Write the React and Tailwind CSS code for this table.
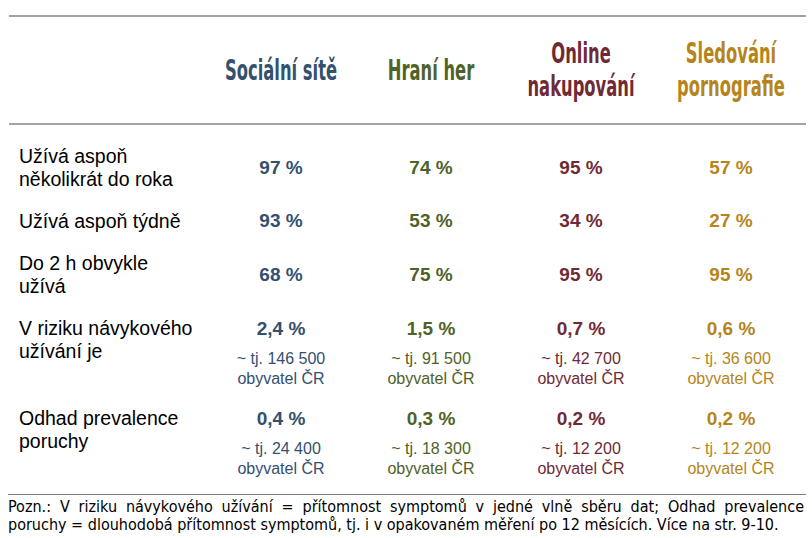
import React from "react";

const cols = [
  { name: ["Sociální sítě"], color: "text-[#33506f]" },
  { name: ["Hraní her"], color: "text-[#4f6228]" },
  { name: ["Online", "nakupování"], color: "text-[#6f2a35]" },
  { name: ["Sledování", "pornografie"], color: "text-[#b5851b]" },
];

const simpleRows = [
  { label: ["Užívá aspoň", "několikrát do roka"], values: ["97 %", "74 %", "95 %", "57 %"], h: "h-[54px]" },
  { label: ["Užívá aspoň týdně"], values: ["93 %", "53 %", "34 %", "27 %"], h: "h-[53px]" },
  { label: ["Do 2 h obvykle", "užívá"], values: ["68 %", "75 %", "95 %", "95 %"], h: "h-[54px]" },
];

const riskRows = [
  {
    label: ["V riziku návykového", "užívání je"],
    values: [
      ["2,4 %", "146 500"],
      ["1,5 %", "91 500"],
      ["0,7 %", "42 700"],
      ["0,6 %", "36 600"],
    ],
    h: "h-[90px]",
  },
  {
    label: ["Odhad prevalence", "poruchy"],
    values: [
      ["0,4 %", "24 400"],
      ["0,3 %", "18 300"],
      ["0,2 %", "12 200"],
      ["0,2 %", "12 200"],
    ],
    h: "h-[88px]",
  },
];

function Label({ lines }) {
  return (
    <div className="pl-[10px] text-[19.5px] leading-[23px] text-black">
      {lines.map((l) => (
        <div key={l}>{l}</div>
      ))}
    </div>
  );
}

export default function App() {
  return (
    <div className="w-[812px] h-[538px] bg-white font-['Liberation_Sans',Arial,sans-serif] overflow-hidden">
      <div className="ml-[9px] w-[797px] pt-[15px]">
        {/* Header */}
        <div className="grid grid-cols-[197px_150px_150px_150px_150px] h-[110px] border-t-2 border-b-2 border-[#a3a3a3] items-center">
          <div />
          {cols.map((c) => (
            <div
              key={c.name[0]}
              className={`flex flex-col items-center whitespace-nowrap font-['DejaVu_Sans_Condensed',sans-serif] font-bold text-[23px] leading-[28px] scale-x-[0.79] scale-y-[1.2] ${c.color}`}
            >
              {c.name.map((n) => (
                <div key={n}>{n}</div>
              ))}
            </div>
          ))}
        </div>

        {/* Body */}
        <div className="pt-[16px]">
          {simpleRows.map((r) => (
            <div key={r.label[0]} className={`grid grid-cols-[197px_150px_150px_150px_150px] items-center ${r.h}`}>
              <Label lines={r.label} />
              {r.values.map((v, i) => (
                <div key={i} className={`text-center font-bold text-[19px] ${cols[i].color}`}>
                  {v}
                </div>
              ))}
            </div>
          ))}

          {riskRows.map((r) => (
            <div key={r.label[0]} className={`grid grid-cols-[197px_150px_150px_150px_150px] items-start pt-[15px] ${r.h}`}>
              <Label lines={r.label} />
              {r.values.map(([v, n], i) => (
                <div key={i} className={`flex flex-col items-center ${cols[i].color}`}>
                  <div className="font-bold text-[19px] leading-[22px] mt-[1px]">{v}</div>
                  <div className="mt-[9px] text-[16px] leading-[20px] text-center">
                    <div>~ tj. {n}</div>
                    <div>obyvatel ČR</div>
                  </div>
                </div>
              ))}
            </div>
          ))}
        </div>
      </div>

      {/* Footer note */}
      <div className="ml-[8px] w-[798px] mt-[14px] border-t-[1.5px] border-[#7f7f7f] pt-[3px] pr-[2px] font-['DejaVu_Sans_Condensed',sans-serif] text-[16px] leading-[18px] text-black text-justify [text-align-last:left]">
        Pozn.: V riziku návykového užívání = přítomnost symptomů v jedné vlně sběru dat; Odhad prevalence poruchy = dlouhodobá přítomnost symptomů, tj. i v opakovaném měření po 12 měsících. Více na str. 9-10.
      </div>
    </div>
  );
}
